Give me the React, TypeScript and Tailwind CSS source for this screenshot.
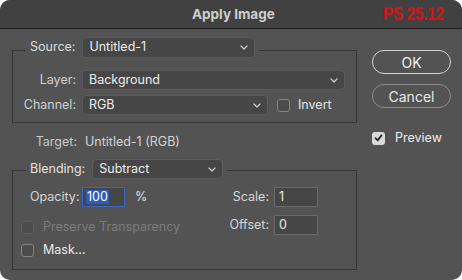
import React from 'react';

const Chevron: React.FC = () => (
  <svg width="8" height="5" viewBox="0 0 8 5" className="shrink-0">
    <path d="M1 1l3 3 3-3" fill="none" stroke="#d0d0d0" strokeWidth="1.2" strokeLinecap="round" strokeLinejoin="round" />
  </svg>
);

interface SelectProps {
  value: string;
  className: string;
}

const Select: React.FC<SelectProps> = ({ value, className }) => (
  <div
    className={`flex items-center justify-between rounded-[4px] border border-[#5c5c5c] bg-[#464646] pl-[6px] pr-[6px] text-[#ececec] ${className}`}
  >
    <span>{value}</span>
    <Chevron />
  </div>
);

const Checkbox: React.FC<{ checked?: boolean; disabled?: boolean }> = ({ checked, disabled }) => {
  if (checked) {
    return (
      <div className="flex h-[13px] w-[13px] shrink-0 items-center justify-center rounded-[3px] bg-[#d9d9d9]">
        <svg width="9" height="8" viewBox="0 0 9 8">
          <path d="M1.5 4.2l2.2 2.2 3.8-5" fill="none" stroke="#2a2a2a" strokeWidth="1.8" strokeLinecap="round" strokeLinejoin="round" />
        </svg>
      </div>
    );
  }
  return (
    <div
      className={`h-[13px] w-[13px] shrink-0 rounded-[3px] border bg-[#4c4c4c] ${
        disabled ? 'border-[#5e5e5e]' : 'border-[#858585]'
      }`}
    />
  );
};

const App: React.FC = () => {
  return (
    <div className="h-[280px] w-[462px] bg-white font-['Inter',sans-serif] text-[12.5px]">
      <div className="flex h-full w-full flex-col overflow-hidden rounded-[10px] bg-[#535353]">
        {/* title bar */}
        <div className="flex h-[29px] shrink-0 items-center border-b border-[#1d1d1d] bg-[#414141]">
          <div className="w-[383px] pl-[192px] text-[13.5px] font-bold text-[#cfcfcf]">Apply Image</div>
          <div className="origin-left scale-x-[0.8] font-['Liberation_Sans',sans-serif] text-[19px] font-bold tracking-[-0.3px] text-[#d4161c]">
            PS 25.12
          </div>
        </div>

        <div className="flex">
          {/* left column */}
          <div className="ml-[12px] flex w-[345px] flex-col">
            {/* Source group */}
            <div className="mt-[21px] flex flex-col border border-[#363636] pb-[7px]">
              <div className="-mt-[14px] ml-[13px] flex items-center gap-[7px] self-start bg-[#535353] px-[4px]">
                <span className="text-[#dcdcdc]">Source:</span>
                <Select value="Untitled-1" className="h-[21px] w-[173px]" />
              </div>
              <div className="mt-[12px] flex items-center gap-[6px]">
                <span className="w-[63px] text-right text-[#d0d0d0]">Layer:</span>
                <Select value="Background" className="h-[20px] w-[263px]" />
              </div>
              <div className="mt-[5px] flex items-center gap-[6px]">
                <span className="w-[63px] text-right text-[#d0d0d0]">Channel:</span>
                <Select value="RGB" className="h-[20px] w-[186px]" />
                <div className="ml-[3px] flex items-center gap-[8px]">
                  <Checkbox />
                  <span className="text-[#e6e6e6]">Invert</span>
                </div>
              </div>
            </div>

            {/* Target */}
            <div className="mt-[11px] flex h-[16px] items-center gap-[8px]">
              <span className="w-[65px] text-right text-[#c8c8c8]">Target:</span>
              <span className="text-[#d4d4d4]">Untitled-1 (RGB)</span>
            </div>

            {/* Blending group */}
            <div className="mt-[20px] flex flex-col border border-[#363636] pb-[12px]">
              <div className="-mt-[12px] ml-[13px] flex items-center gap-[7px] self-start bg-[#535353] px-[4px]">
                <span className="text-[#e2e2e2]">Blending:</span>
                <Select value="Subtract" className="h-[20px] w-[131px]" />
              </div>
              <div className="mt-[8px] flex justify-between">
                <div className="flex flex-col pl-[8px]">
                  <div className="flex h-[20px] items-center pl-[9px]">
                    <span className="w-[52px] text-[#d6d6d6]">Opacity:</span>
                    <div className="flex h-[20px] w-[43px] items-center border border-[#3a66c8] bg-[#464646] pl-[3px]">
                      <span className="bg-[#2e5db8] px-[1px] leading-[14px] text-white">100</span>
                    </div>
                    <span className="ml-[10px] text-[#e0e0e0]">%</span>
                  </div>
                  <div className="mt-[13px] flex h-[14px] items-center gap-[9px]">
                    <Checkbox disabled />
                    <span className="text-[#7c7c7c]">Preserve Transparency</span>
                  </div>
                  <div className="mt-[9px] flex h-[14px] items-center gap-[9px]">
                    <Checkbox />
                    <span className="text-[#ececec]">Mask...</span>
                  </div>
                </div>
                <div className="mr-[38px] flex flex-col gap-[8px]">
                  <div className="flex h-[20px] items-center gap-[5px]">
                    <span className="w-[40px] text-right text-[#d6d6d6]">Scale:</span>
                    <div className="flex h-[20px] w-[44px] items-center border border-[#6a6a6a] bg-[#464646] pl-[4px] text-[#ececec]">
                      1
                    </div>
                  </div>
                  <div className="flex h-[20px] items-center gap-[5px]">
                    <span className="w-[40px] text-right text-[#d6d6d6]">Offset:</span>
                    <div className="flex h-[20px] w-[44px] items-center border border-[#6a6a6a] bg-[#464646] pl-[4px] text-[#ececec]">
                      0
                    </div>
                  </div>
                </div>
              </div>
            </div>
          </div>

          {/* right column */}
          <div className="ml-[15px] flex w-[80px] flex-col pt-[21px]">
            <button className="flex h-[24px] w-[79px] items-center justify-center rounded-full border border-[#d2d2d2] text-[14px] text-[#f2f2f2]">
              OK
            </button>
            <button className="mt-[10px] flex h-[24px] w-[79px] items-center justify-center rounded-full border border-[#8c8c8c] text-[14px] text-[#e8e8e8]">
              Cancel
            </button>
            <div className="mt-[21px] flex items-center gap-[10px]">
              <Checkbox checked />
              <span className="text-[#ececec]">Preview</span>
            </div>
          </div>
        </div>
      </div>
    </div>
  );
};

export default App;
